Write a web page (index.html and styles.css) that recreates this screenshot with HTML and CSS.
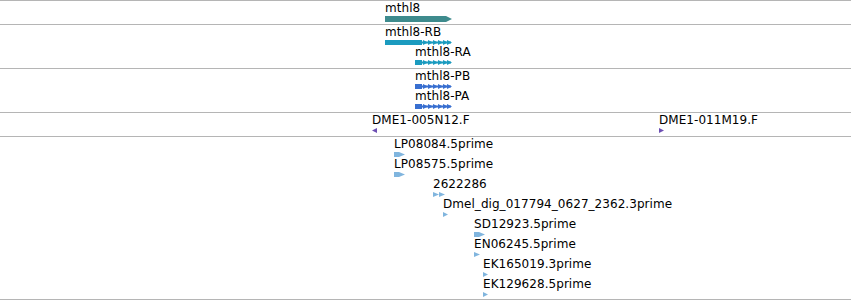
FILE: index.html
```html
<!DOCTYPE html>
<html lang="en">
<head>
  <meta charset="UTF-8" />
  <title>Region tracks</title>
  <link rel="stylesheet" href="styles.css">
</head>
<body>
  <div class="tracks">

    <!-- Gene -->
    <div class="track">
      <div class="row">
        <div class="feature" style="left: 385px">
          <div class="label">mthl8</div>
          <svg class="glyph" width="68" height="6" viewBox="0 0 68 6">
            <polygon class="gene" points="0,0 61,0 67,3 61,6 0,6" />
          </svg>
        </div>
      </div>
    </div>

    <!-- Transcripts -->
    <div class="track">
      <div class="row">
        <div class="feature" style="left: 385px">
          <div class="label">mthl8-RB</div>
          <svg class="glyph" width="68" height="5" viewBox="0 0 68 5">
            <g class="mrna">
              <rect x="0" y="0" width="37" height="5" />
              <rect x="37" y="1.5" width="29" height="2" />
              <polygon points="38,0 43,2.5 38,5" />
              <polygon points="43,0 48,2.5 43,5" />
              <polygon points="48,0 53,2.5 48,5" />
              <polygon points="53,0 58,2.5 53,5" />
              <polygon points="58,0 63,2.5 58,5" />
              <polygon points="62,0 67,2.5 62,5" />
            </g>
          </svg>
        </div>
      </div>
      <div class="row">
        <div class="feature" style="left: 415px">
          <div class="label">mthl8-RA</div>
          <svg class="glyph" width="38" height="5" viewBox="0 0 38 5">
            <g class="mrna">
              <rect x="0" y="0" width="7" height="5" />
              <rect x="7" y="1.5" width="29" height="2" />
              <polygon points="8,0 13,2.5 8,5" />
              <polygon points="13,0 18,2.5 13,5" />
              <polygon points="18,0 23,2.5 18,5" />
              <polygon points="23,0 28,2.5 23,5" />
              <polygon points="28,0 33,2.5 28,5" />
              <polygon points="32,0 37,2.5 32,5" />
            </g>
          </svg>
        </div>
      </div>
    </div>

    <!-- Polypeptides -->
    <div class="track">
      <div class="row">
        <div class="feature" style="left: 415px">
          <div class="label">mthl8-PB</div>
          <svg class="glyph" width="38" height="5" viewBox="0 0 38 5">
            <g class="protein">
              <rect x="0" y="0" width="7" height="5" />
              <rect x="7" y="1.5" width="29" height="2" />
              <polygon points="8,0 13,2.5 8,5" />
              <polygon points="13,0 18,2.5 13,5" />
              <polygon points="18,0 23,2.5 18,5" />
              <polygon points="23,0 28,2.5 23,5" />
              <polygon points="28,0 33,2.5 28,5" />
              <polygon points="32,0 37,2.5 32,5" />
            </g>
          </svg>
        </div>
      </div>
      <div class="row">
        <div class="feature" style="left: 415px">
          <div class="label">mthl8-PA</div>
          <svg class="glyph" width="38" height="5" viewBox="0 0 38 5">
            <g class="protein">
              <rect x="0" y="0" width="7" height="5" />
              <rect x="7" y="1.5" width="29" height="2" />
              <polygon points="8,0 13,2.5 8,5" />
              <polygon points="13,0 18,2.5 13,5" />
              <polygon points="18,0 23,2.5 18,5" />
              <polygon points="23,0 28,2.5 23,5" />
              <polygon points="28,0 33,2.5 28,5" />
              <polygon points="32,0 37,2.5 32,5" />
            </g>
          </svg>
        </div>
      </div>
    </div>

    <!-- BAC ends -->
    <div class="track">
      <div class="row">
        <div class="feature" style="left: 372px">
          <div class="label">DME1-005N12.F</div>
          <svg class="glyph" width="5" height="5" viewBox="0 0 5 5">
            <polygon class="clone" points="5,0 0,2.5 5,5" />
          </svg>
        </div>
        <div class="feature" style="left: 659px">
          <div class="label">DME1-011M19.F</div>
          <svg class="glyph" width="5" height="5" viewBox="0 0 5 5">
            <polygon class="clone" points="0,0 5,2.5 0,5" />
          </svg>
        </div>
      </div>
    </div>

    <!-- ESTs -->
    <div class="track track-last">
      <div class="row">
        <div class="feature" style="left: 394px">
          <div class="label">LP08084.5prime</div>
          <svg class="glyph" width="11" height="5" viewBox="0 0 11 5">
            <polygon class="est" points="0,0 5,0 11,2.5 5,5 0,5" />
          </svg>
        </div>
      </div>
      <div class="row">
        <div class="feature" style="left: 394px">
          <div class="label">LP08575.5prime</div>
          <svg class="glyph" width="11" height="5" viewBox="0 0 11 5">
            <polygon class="est" points="0,0 5,0 11,2.5 5,5 0,5" />
          </svg>
        </div>
      </div>
      <div class="row">
        <div class="feature" style="left: 433px">
          <div class="label">2622286</div>
          <svg class="glyph" width="12" height="5" viewBox="0 0 12 5">
            <g class="est">
              <polygon points="0,0 6,2.5 0,5" />
              <polygon points="6,0 12,2.5 6,5" />
            </g>
          </svg>
        </div>
      </div>
      <div class="row">
        <div class="feature" style="left: 443px">
          <div class="label">Dmel_dig_017794_0627_2362.3prime</div>
          <svg class="glyph" width="5" height="5" viewBox="0 0 5 5">
            <polygon class="est" points="0,0 5,2.5 0,5" />
          </svg>
        </div>
      </div>
      <div class="row">
        <div class="feature" style="left: 474px">
          <div class="label">SD12923.5prime</div>
          <svg class="glyph" width="11" height="5" viewBox="0 0 11 5">
            <polygon class="est" points="0,0 5,0 11,2.5 5,5 0,5" />
          </svg>
        </div>
      </div>
      <div class="row">
        <div class="feature" style="left: 474px">
          <div class="label">EN06245.5prime</div>
          <svg class="glyph" width="6" height="5" viewBox="0 0 6 5">
            <polygon class="est" points="0,0 6,2.5 0,5" />
          </svg>
        </div>
      </div>
      <div class="row">
        <div class="feature" style="left: 483px">
          <div class="label">EK165019.3prime</div>
          <svg class="glyph" width="5" height="5" viewBox="0 0 5 5">
            <polygon class="est" points="0,0 5,2.5 0,5" />
          </svg>
        </div>
      </div>
      <div class="row">
        <div class="feature" style="left: 483px">
          <div class="label">EK129628.5prime</div>
          <svg class="glyph" width="5" height="5" viewBox="0 0 5 5">
            <polygon class="est" points="0,0 5,2.5 0,5" />
          </svg>
        </div>
      </div>
    </div>

  </div>
</body>
</html>
```

FILE: styles.css
```css
body {
  margin: 0;
  background-color: white;
  color: black;
  font-family: 'DejaVu Sans', sans-serif;
  font-size: 12px;
}

.tracks {
  width: 851px;
  border-top: 1px solid #b5b5b5;
}

.track {
  padding-bottom: 3px;
  border-bottom: 1px solid #b5b5b5;
}

.track-last {
  padding-bottom: 2px;
}

.row {
  position: relative;
  height: 20px;
}

.feature {
  position: absolute;
  top: 0;
}

.label {
  height: 15px;
  line-height: 15px;
  white-space: nowrap;
  letter-spacing: 0.05px;
}

.glyph {
  display: block;
}

.gene {
  fill: #3e8b8d;
}

.mrna {
  fill: #1b9bbf;
}

.protein {
  fill: #386fd0;
}

.clone {
  fill: #6d4fb3;
}

.est {
  fill: #80b5de;
}
```
